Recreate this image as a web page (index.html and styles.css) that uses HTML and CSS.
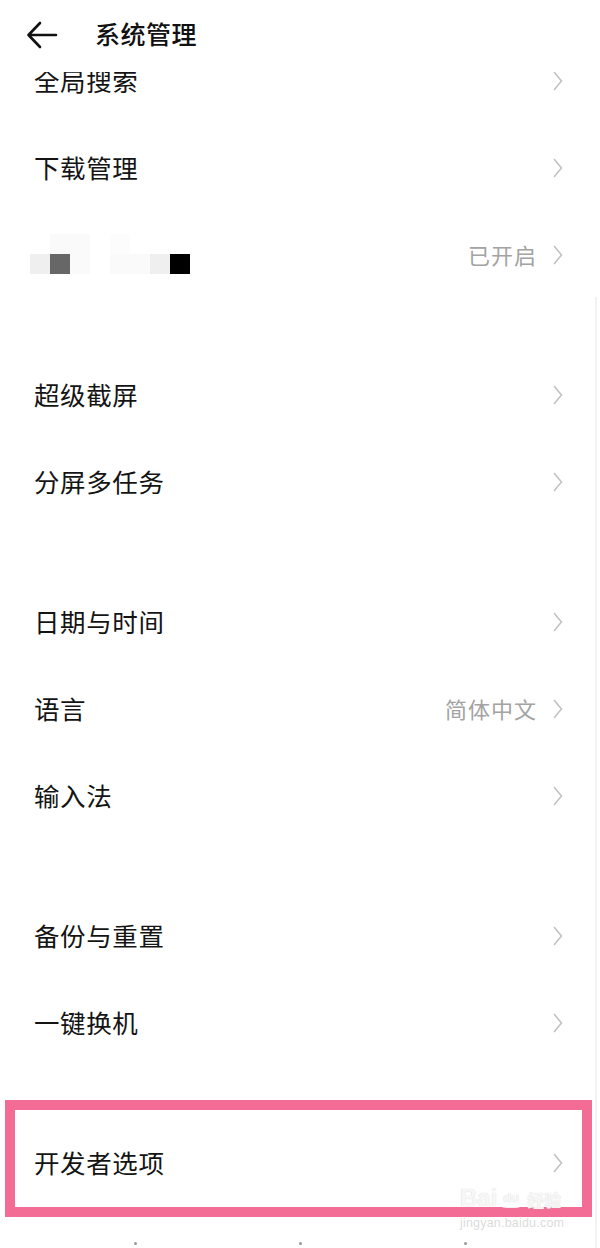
FILE: index.html
```html
<!DOCTYPE html>
<html lang="zh-CN">
<head>
<meta charset="utf-8">
<title>系统管理</title>
<link rel="stylesheet" href="styles.css">
</head>
<body>
<div class="screen">
  <header class="topbar">
    <svg class="back" width="32" height="28" viewBox="0 0 32 28"><path d="M30 14 H3 M14 2 L2.5 14 L14 26" fill="none" stroke="#111" stroke-width="2.6" stroke-linecap="round" stroke-linejoin="round"/></svg>
    <h1 class="title">系统管理</h1>
  </header>

  <main class="list">
    <section class="group">
      <div class="row"><span class="label">全局搜索</span><span class="right"><svg class="chev" width="10" height="20" viewBox="0 0 10 20"><path d="M1.5 1.5 Q5 6 8.5 10 Q5 14 1.5 18.5" fill="none" stroke="#c2c2c2" stroke-width="1.6" stroke-linecap="round"/></svg></span></div>
      <div class="row"><span class="label">下载管理</span><span class="right"><svg class="chev" width="10" height="20" viewBox="0 0 10 20"><path d="M1.5 1.5 Q5 6 8.5 10 Q5 14 1.5 18.5" fill="none" stroke="#c2c2c2" stroke-width="1.6" stroke-linecap="round"/></svg></span></div>
      <div class="row">
        <div class="pixels">
          <div class="pxrow"><i class="c0"></i><i class="c1"></i><i class="c1"></i><i class="c0"></i><i class="c2"></i><i class="c0"></i><i class="c0"></i><i class="c0"></i></div>
          <div class="pxrow"><i class="c3"></i><i class="c4"></i><i class="c1"></i><i class="c0"></i><i class="c1"></i><i class="c1"></i><i class="c3"></i><i class="c5"></i></div>
        </div>
        <span class="right"><span class="value">已开启</span><svg class="chev" width="10" height="20" viewBox="0 0 10 20"><path d="M1.5 1.5 Q5 6 8.5 10 Q5 14 1.5 18.5" fill="none" stroke="#c2c2c2" stroke-width="1.6" stroke-linecap="round"/></svg></span>
      </div>
    </section>

    <section class="group">
      <div class="row"><span class="label">超级截屏</span><span class="right"><svg class="chev" width="10" height="20" viewBox="0 0 10 20"><path d="M1.5 1.5 Q5 6 8.5 10 Q5 14 1.5 18.5" fill="none" stroke="#c2c2c2" stroke-width="1.6" stroke-linecap="round"/></svg></span></div>
      <div class="row"><span class="label">分屏多任务</span><span class="right"><svg class="chev" width="10" height="20" viewBox="0 0 10 20"><path d="M1.5 1.5 Q5 6 8.5 10 Q5 14 1.5 18.5" fill="none" stroke="#c2c2c2" stroke-width="1.6" stroke-linecap="round"/></svg></span></div>
    </section>

    <section class="group">
      <div class="row"><span class="label">日期与时间</span><span class="right"><svg class="chev" width="10" height="20" viewBox="0 0 10 20"><path d="M1.5 1.5 Q5 6 8.5 10 Q5 14 1.5 18.5" fill="none" stroke="#c2c2c2" stroke-width="1.6" stroke-linecap="round"/></svg></span></div>
      <div class="row"><span class="label">语言</span><span class="right"><span class="value">简体中文</span><svg class="chev" width="10" height="20" viewBox="0 0 10 20"><path d="M1.5 1.5 Q5 6 8.5 10 Q5 14 1.5 18.5" fill="none" stroke="#c2c2c2" stroke-width="1.6" stroke-linecap="round"/></svg></span></div>
      <div class="row"><span class="label">输入法</span><span class="right"><svg class="chev" width="10" height="20" viewBox="0 0 10 20"><path d="M1.5 1.5 Q5 6 8.5 10 Q5 14 1.5 18.5" fill="none" stroke="#c2c2c2" stroke-width="1.6" stroke-linecap="round"/></svg></span></div>
    </section>

    <section class="group">
      <div class="row"><span class="label">备份与重置</span><span class="right"><svg class="chev" width="10" height="20" viewBox="0 0 10 20"><path d="M1.5 1.5 Q5 6 8.5 10 Q5 14 1.5 18.5" fill="none" stroke="#c2c2c2" stroke-width="1.6" stroke-linecap="round"/></svg></span></div>
      <div class="row"><span class="label">一键换机</span><span class="right"><svg class="chev" width="10" height="20" viewBox="0 0 10 20"><path d="M1.5 1.5 Q5 6 8.5 10 Q5 14 1.5 18.5" fill="none" stroke="#c2c2c2" stroke-width="1.6" stroke-linecap="round"/></svg></span></div>
    </section>

    <section class="group">
      <div class="row"><span class="label">开发者选项</span><span class="right"><svg class="chev" width="10" height="20" viewBox="0 0 10 20"><path d="M1.5 1.5 Q5 6 8.5 10 Q5 14 1.5 18.5" fill="none" stroke="#c2c2c2" stroke-width="1.6" stroke-linecap="round"/></svg></span></div>
    </section>
  </main>

  <div class="scrollbar"></div>
  <div class="highlight"></div>

  <div class="watermark">
    <div class="wm-logo"><span class="wm-bai">Bai</span><span class="wm-du">du</span><span class="wm-jy">经验</span></div>
    <div class="wm-url">jingyan.baidu.com</div>
  </div>

  <div class="navdots"><i></i><i></i><i></i></div>
</div>
</body>
</html>
```

FILE: styles.css
```css
* { box-sizing: border-box; }
html, body { margin: 0; padding: 0; background: #fff; }
body {
  font-family: "Noto Sans CJK SC", "Noto Sans", "Liberation Sans", sans-serif;
  color: #141414;
}
.screen {
  position: relative;
  width: 600px;
  height: 1248px;
  overflow: hidden;
  background: #fff;
}
.topbar {
  position: absolute;
  top: 0; left: 0; right: 0;
  height: 72px;
  background: #fff;
  display: flex;
  align-items: center;
  padding: 0 0 2px 26px;
  z-index: 2;
}
.back { display: block; }
.title {
  margin: -3px 0 0 37px;
  font-size: 25px;
  font-weight: 500;
  line-height: 1;
  color: #111;
  letter-spacing: 0.5px;
}
.list {
  padding-top: 36px;
  display: flex;
  flex-direction: column;
  gap: 53px;
}
.group { display: flex; flex-direction: column; }
.row {
  height: 87px;
  display: flex;
  align-items: center;
  justify-content: space-between;
  padding: 0 37px 0 34px;
}
.label {
  font-size: 25.5px;
  line-height: 1;
  color: #141414;
  letter-spacing: 0.6px;
}
.right { display: flex; align-items: center; gap: 16px; }
.value {
  font-size: 22px;
  color: #a3a3a3;
  letter-spacing: 1px;
}
.chev { display: block; margin-top: 3px; }
.pixels {
  display: flex;
  flex-direction: column;
  margin-left: -4px;
  margin-top: 0px;
}
.pxrow { display: flex; }
.pxrow i { display: block; width: 20px; height: 20px; }
.c0 { background: #fff; }
.c1 { background: #fafafa; }
.c2 { background: #fcfcfc; }
.c3 { background: #efefef; }
.c4 { background: #676767; }
.c5 { background: #000; }
.scrollbar {
  position: absolute;
  left: 595px;
  top: 297px;
  width: 2px;
  bottom: 0;
  background: #f2f2f2;
}
.highlight {
  position: absolute;
  left: 5px;
  top: 1100px;
  width: 587px;
  height: 117px;
  border: 10px solid #f26c95;
  z-index: 3;
}
.watermark {
  position: absolute;
  left: 460px;
  top: 1180px;
  width: 110px;
  z-index: 4;
  font-family: "Liberation Sans", sans-serif;
}
.wm-logo {
  display: flex;
  align-items: flex-end;
  height: 30px;
  color: rgba(255, 255, 255, 0.85);
  text-shadow: 0 0 1px rgba(190, 190, 190, 0.8);
}
.wm-bai { font-size: 24px; font-weight: 700; line-height: 1; }
.wm-du {
  font-size: 13px;
  font-weight: 700;
  line-height: 1;
  padding: 2px 3px;
  border: 2px solid rgba(255, 255, 255, 0.85);
  border-radius: 8px;
  margin: 0 3px 2px 1px;
}
.wm-jy {
  font-family: "Noto Sans CJK SC", sans-serif;
  font-size: 17px;
  font-weight: 700;
  line-height: 1;
  margin-bottom: 2px;
}
.wm-url {
  margin-top: 6px;
  font-size: 12.5px;
  color: rgba(215, 215, 215, 0.9);
  letter-spacing: 0.2px;
}
.navdots {
  position: absolute;
  left: 0; right: 0;
  top: 1242px;
  display: flex;
  justify-content: center;
  gap: 162px;
  padding-left: 1px;
}
.navdots i {
  display: block;
  width: 3px;
  height: 3px;
  border-radius: 50%;
  background: #9a9a9a;
}
```
